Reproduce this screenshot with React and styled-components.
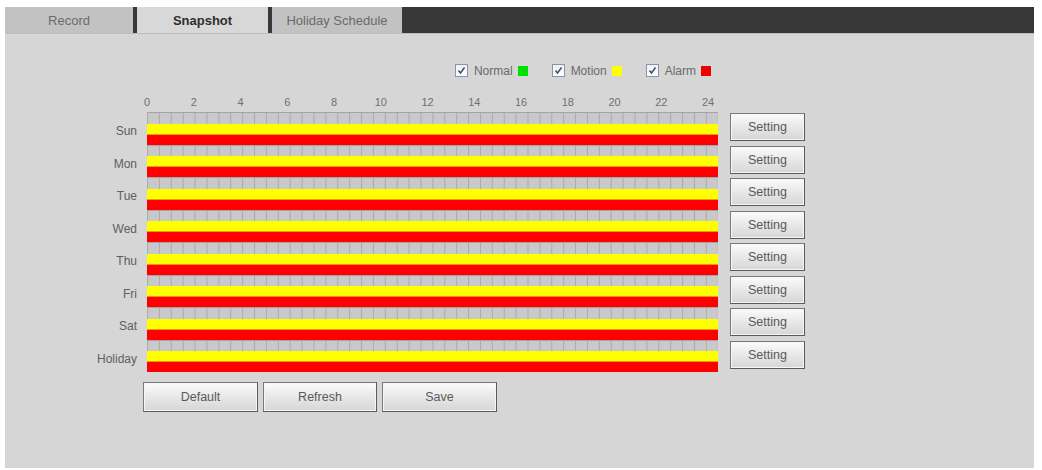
import React from 'react';
import styled, {createGlobalStyle} from 'styled-components';

const GlobalStyle = createGlobalStyle`
  html, body {
    margin: 0;
    padding: 0;
    background: #ffffff;
    font-family: "Liberation Sans", Arial, sans-serif;
  }
`;

const Panel = styled.div`
  margin: 7px 8px 2px 5px;
  height: 461px;
  background-color: #d6d6d6;
  display: flex;
  flex-direction: column;
`;

const TabBar = styled.div`
  display: flex;
  height: 26px;
  gap: 4px;
  background-color: #383838;
  border-bottom: 1px solid #bdbdbd;
`;

const Tab = styled.div`
  width: ${p => p.$width}px;
  display: flex;
  align-items: center;
  justify-content: center;
  font-size: 13px;
  color: ${p => p.$active ? '#2e2e2e' : '#6a6a6a'};
  font-weight: ${p => p.$active ? 700 : 400};
  background-color: ${p => p.$active ? '#d8d8d8' : '#c2c2c2'};
  user-select: none;
`;

const Schedule = styled.div`
  display: grid;
  grid-template-columns: 142px 571px 1fr;
  margin-top: 29px;
`;

const Legend = styled.div`
  grid-column: 2;
  display: flex;
  justify-content: flex-end;
  align-items: center;
  gap: 24px;
  padding-right: 7px;
  height: 15px;
`;

const LegendItem = styled.div`
  display: flex;
  align-items: center;
  gap: 5px;
  font-size: 12px;
  color: #6a6a6a;
`;

const CheckBox = styled.span`
  width: 11px;
  height: 11px;
  margin-right: 1px;
  border: 1px solid #8a94a6;
  background: linear-gradient(#eef0f4, #ffffff);
  display: flex;
  align-items: center;
  justify-content: center;
`;

const Swatch = styled.span`
  width: 10px;
  height: 10px;
  background-color: ${p => p.$color};
`;

const Ruler = styled.div`
  grid-column: 2;
  width: 561px;
  display: flex;
  justify-content: space-between;
  margin-top: 18px;
  height: 16px;
`;

const Hour = styled.span`
  width: 0;
  display: flex;
  justify-content: center;
  white-space: nowrap;
  font-size: 11px;
  color: #707070;
`;

const DayLabel = styled.div`
  grid-column: 1;
  text-align: right;
  padding: 12px 10px 0 0;
  font-size: 12px;
  color: #606060;
  height: 32.5px;
  box-sizing: border-box;
`;

const Bars = styled.div`
  grid-column: 2;
  display: flex;
  flex-direction: column;
  height: 32.5px;
`;

const GridBand = styled.div`
  height: 11.5px;
  box-sizing: border-box;
  border-top: 1px solid #a4a4a4;
  background-color: #c9c9cc;
  background-image: linear-gradient(to right, #aaaaaa 1px, transparent 1px);
  background-size: calc(100% / 48) 100%;
`;

const MotionBand = styled.div`
  height: 11px;
  box-sizing: border-box;
  background-color: #ffff00;
  border-bottom: 1px solid #f29a00;
`;

const AlarmBand = styled.div`
  height: 10px;
  background-color: #ff0000;
`;

const SettingCell = styled.div`
  grid-column: 3;
  padding: 1px 0 0 12px;
  height: 32.5px;
  box-sizing: border-box;
`;

const Button = styled.button`
  width: ${p => p.$width}px;
  height: ${p => p.$height}px;
  padding: 0;
  font-family: "Liberation Sans", Arial, sans-serif;
  font-size: 12.5px;
  color: #5a5a5a;
  border: 1px solid #7a7a7a;
  border-right-color: #5a5a5a;
  border-bottom-color: #5a5a5a;
  background: linear-gradient(#fbfbfb, #e6e6e6 55%, #d6d6d6);
  box-shadow: inset 0 0 0 1px #f6f6f6;
  cursor: pointer;
`;

const ButtonRow = styled.div`
  grid-column: 2 / 4;
  display: flex;
  gap: 5px;
  margin: 10px 0 0 -4px;
`;

const days = ['Sun', 'Mon', 'Tue', 'Wed', 'Thu', 'Fri', 'Sat', 'Holiday'];
const hours = [0, 2, 4, 6, 8, 10, 12, 14, 16, 18, 20, 22, 24];
const legend = [
    {label: 'Normal', color: '#00e000'},
    {label: 'Motion', color: '#ffff00'},
    {label: 'Alarm', color: '#ee0000'},
];

function Check() {
    return (
        <CheckBox>
            <svg width="9" height="9" viewBox="0 0 9 9">
                <path d="M1.5 4.5 L3.5 7 L7.5 1.5" fill="none" stroke="#3a4a6a" strokeWidth="1.4"/>
            </svg>
        </CheckBox>
    );
}

export default function App() {
    return (
        <>
            <GlobalStyle/>
            <Panel>
                <TabBar>
                    <Tab $width={128}>Record</Tab>
                    <Tab $width={131} $active>Snapshot</Tab>
                    <Tab $width={130}>Holiday Schedule</Tab>
                </TabBar>

                <Schedule>
                    <Legend>
                        {legend.map(item => (
                            <LegendItem key={item.label}>
                                <Check/>
                                {item.label}
                                <Swatch $color={item.color}/>
                            </LegendItem>
                        ))}
                    </Legend>

                    <Ruler>
                        {hours.map(h => <Hour key={h}>{h}</Hour>)}
                    </Ruler>

                    {days.map(day => (
                        <React.Fragment key={day}>
                            <DayLabel>{day}</DayLabel>
                            <Bars>
                                <GridBand/>
                                <MotionBand/>
                                <AlarmBand/>
                            </Bars>
                            <SettingCell>
                                <Button $width={75} $height={28}>Setting</Button>
                            </SettingCell>
                        </React.Fragment>
                    ))}

                    <ButtonRow>
                        <Button $width={115} $height={30}>Default</Button>
                        <Button $width={114} $height={30}>Refresh</Button>
                        <Button $width={115} $height={30}>Save</Button>
                    </ButtonRow>
                </Schedule>
            </Panel>
        </>
    );
}
